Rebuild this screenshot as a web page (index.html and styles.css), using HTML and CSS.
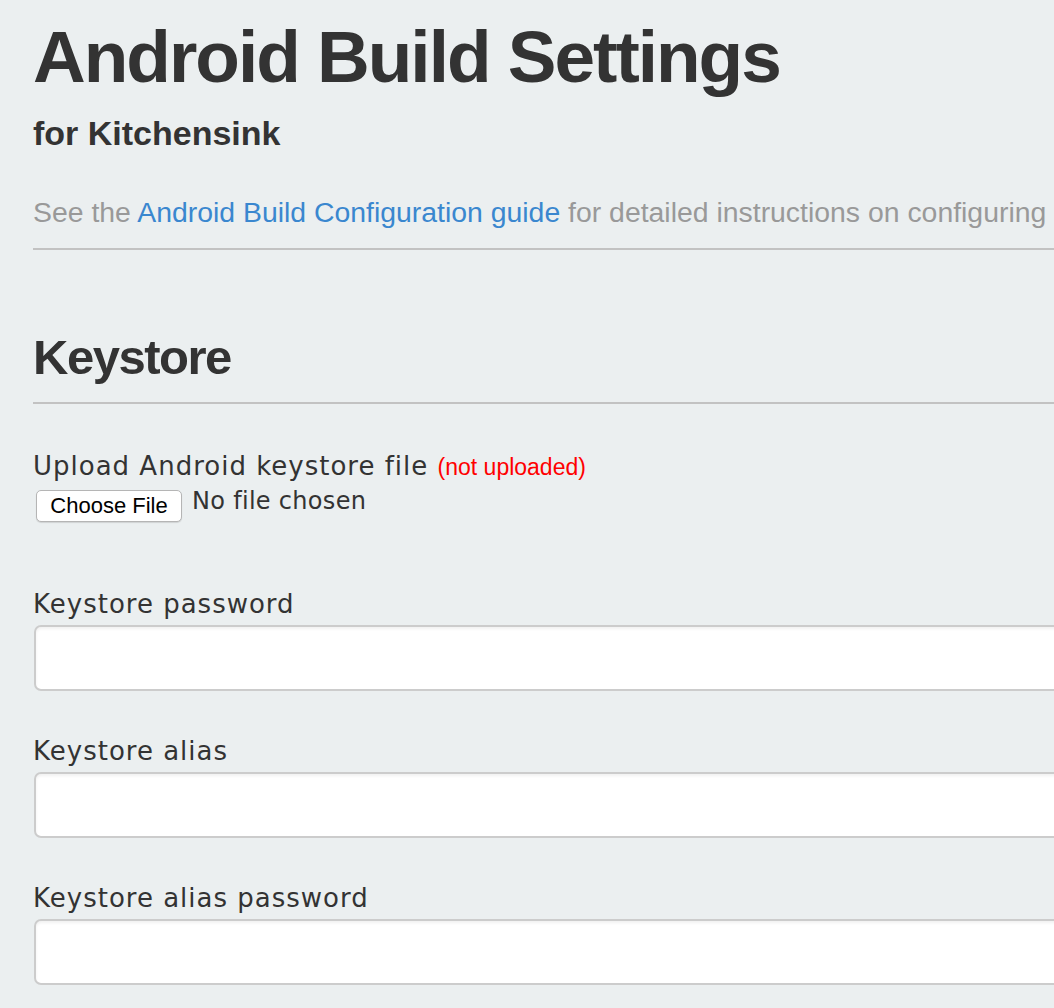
FILE: index.html
```html
<!DOCTYPE html>
<html lang="en">
<head>
<meta charset="utf-8">
<title>Android Build Settings</title>
<link rel="stylesheet" href="styles.css">
</head>
<body>
<div class="page">
  <h1 class="title">Android Build Settings</h1>
  <h2 class="subtitle">for Kitchensink</h2>
  <p class="intro">See the <a href="#" class="link">Android Build Configuration guide</a> for detailed instructions on configuring</p>
  <hr class="rule">
  <h2 class="section">Keystore</h2>
  <hr class="rule rule-tight">
  <div class="field field-upload">
    <label class="label">Upload Android keystore file <span class="status">(not uploaded)</span></label>
    <div class="file-row">
      <span class="file-btn">Choose File</span>
      <span class="file-name">No file chosen</span>
    </div>
  </div>
  <div class="field">
    <label class="label">Keystore password</label>
    <div class="input"></div>
  </div>
  <div class="field">
    <label class="label">Keystore alias</label>
    <div class="input"></div>
  </div>
  <div class="field">
    <label class="label">Keystore alias password</label>
    <div class="input"></div>
  </div>
</div>
</body>
</html>
```
FILE: styles.css
```css
html, body {
  margin: 0;
  padding: 0;
  background: #ebeff0;
  overflow: hidden;
}
.page {
  width: 1400px;
  padding: 17px 0 0 33px;
  font-family: "Liberation Sans", Arial, sans-serif;
  color: #333;
}
.title {
  margin: 0;
  font-size: 73px;
  line-height: 80px;
  font-weight: bold;
  letter-spacing: -2px;
}
.subtitle {
  margin: 16px 0 0;
  font-size: 34px;
  line-height: 40px;
  font-weight: bold;
}
.intro {
  margin: 41px 0 0;
  font-size: 28.4px;
  line-height: 36px;
  color: #999;
  white-space: nowrap;
}
.link {
  color: #3a87cf;
  text-decoration: none;
}
.rule {
  margin: 18px 0 0;
  border: 0;
  height: 2px;
  background: #c2c2c2;
}
.section {
  margin: 79px 0 0;
  font-size: 49px;
  line-height: 56px;
  font-weight: bold;
  letter-spacing: -1.5px;
}
.rule-tight {
  margin-top: 17px;
}
.field {
  display: flex;
  flex-direction: column;
  margin-top: 44px;
}
.field-upload {
  margin-top: 46px;
  margin-bottom: 66px;
}
.label {
  display: block;
  font-family: "DejaVu Sans", Verdana, sans-serif;
  font-size: 26px;
  line-height: 32px;
  letter-spacing: 1px;
  color: #333;
}
.status {
  font-family: "Liberation Sans", Arial, sans-serif;
  font-size: 23px;
  letter-spacing: 0;
  color: #f00;
}
.file-row {
  display: flex;
  align-items: center;
  gap: 10px;
  margin-top: 7px;
  margin-left: 3px;
}
.file-btn {
  box-sizing: border-box;
  height: 32px;
  width: 146px;
  display: flex;
  align-items: center;
  justify-content: center;
  background: #fff;
  border: 1px solid #b5b5b5;
  border-radius: 5px;
  box-shadow: 0 1px 1px rgba(0,0,0,0.12);
  font-size: 22px;
  color: #000;
}
.file-name {
  font-family: "DejaVu Sans", Verdana, sans-serif;
  font-size: 24px;
  letter-spacing: 0.3px;
  color: #333;
  margin-top: -10px;
}
.input {
  box-sizing: border-box;
  margin-top: 5px;
  margin-left: 1px;
  height: 66px;
  background: #fff;
  border: 2px solid #cccccc;
  border-radius: 7px;
  box-shadow: inset 0 2px 3px rgba(0,0,0,0.06);
}
```
